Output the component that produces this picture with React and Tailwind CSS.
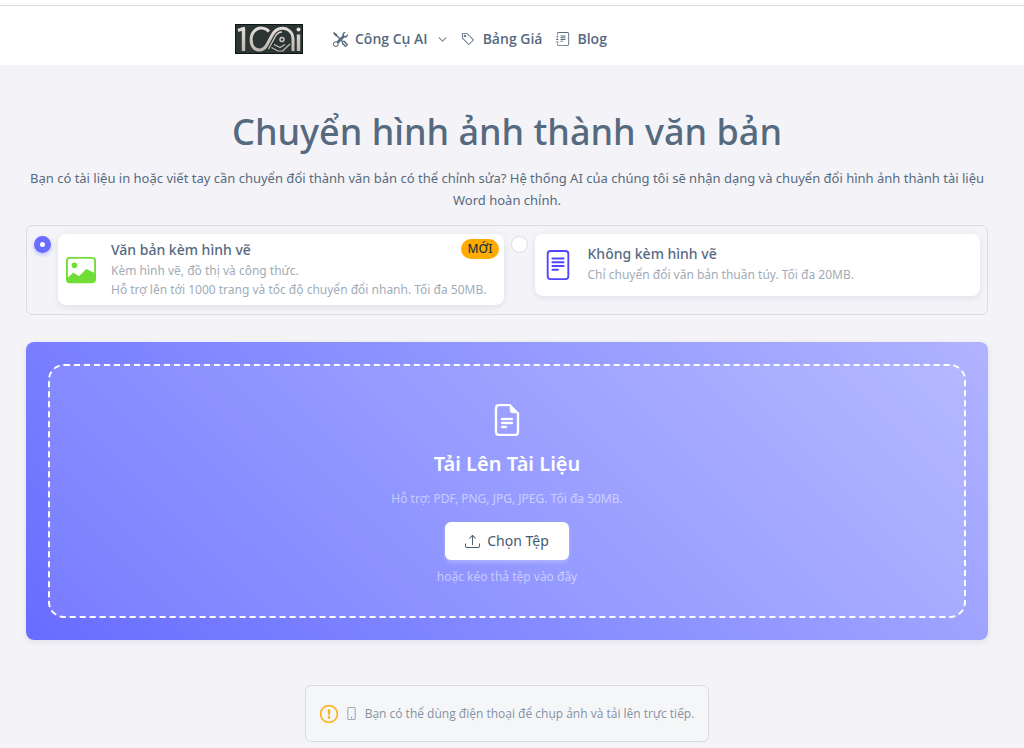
import React, { useState } from "react";
import {
  BsTools, BsTag, BsJournalText, BsChevronDown, BsImage, BsFileText,
  BsFileEarmarkText, BsUpload, BsPhone, BsExclamationCircle,
} from "react-icons/bs";

function Logo() {
  return (
    <svg viewBox="0 0 68 30" className="h-[30px] w-[68px]" role="img" aria-label="100Ai">
      <defs>
        <linearGradient id="silver" gradientUnits="userSpaceOnUse" x1="0" y1="2" x2="0" y2="28">
          <stop offset="0" stopColor="#e6e1dc" />
          <stop offset="1" stopColor="#bdb5ae" />
        </linearGradient>
      </defs>
      <rect width="68" height="30" fill="#2a3534" />
      <rect x="0.5" y="0.5" width="67" height="29" fill="none" stroke="#0f1716" />
      <g fill="none" stroke="url(#silver)" strokeLinejoin="round">
        <path d="M3 6.500L8.500 4.500V27" strokeWidth="3.400" />
        <path d="M34 7.500C31 3.500 24 3 20.500 6C15 10 15 20 19 24C23 27.500 28.500 26.500 31.500 21.500L37.500 10.500C40.500 5 46.500 3 51.500 5C56 7 58 10.500 58 15V27" strokeWidth="3" />
        <path d="M33.500 25L40 13C42 9 44.500 8 47 8" strokeWidth="1.400" />
        <path d="M36.500 23.500L43 27H47.500L55 20M39 20.500L45 23.500L50 20.500" strokeWidth="1.200" />
        <circle cx="47" cy="15.500" r="2" strokeWidth="1.400" />
        <path d="M63.500 10.500V27" strokeWidth="3.400" />
      </g>
      <circle cx="63.500" cy="5.500" r="2" fill="#e6e1dc" />
    </svg>
  );
}

function Option({ id, checked, onSelect, children, cardClass }) {
  return (
    <div className="flex min-w-0 flex-1 items-start gap-[7px]">
      <input
        id={id}
        type="radio"
        name="mode"
        checked={checked}
        onChange={onSelect}
        className="mt-[2px] size-[17px] shrink-0 appearance-none rounded-full border border-[#d9dee3] bg-white checked:border-[6px] checked:border-[#696cff] checked:shadow-[0_2px_4px_rgba(105,108,255,0.4)]"
      />
      <label htmlFor={id} className={`flex min-w-0 flex-1 rounded-lg bg-white shadow-[0_2px_6px_rgba(67,89,113,0.12)] ${cardClass}`}>
        {children}
      </label>
    </div>
  );
}

export default function App() {
  const [mode, setMode] = useState("figures");
  return (
    <div className="min-h-screen bg-[#f4f4f8] font-['Noto_Sans','Open_Sans',sans-serif] text-[#566a7f]">
      <header className="bg-white pt-[5px]">
        <div className="border-t border-[#d9dbe4]">
          <div className="flex h-[59px] items-center pt-[7px] pl-[235px]">
            <a href="#home"><Logo /></a>
            <nav className="ml-[30px] flex items-center font-['Open_Sans','Noto_Sans',sans-serif] text-sm font-semibold whitespace-nowrap">
              <a href="#tools" className="flex items-center">
                <BsTools size={15} />
                <span className="ml-[7px]">Công Cụ AI</span>
                <BsChevronDown size={9} strokeWidth={0.5} className="ml-[10px]" />
              </a>
              <a href="#pricing" className="ml-[14px] flex items-center gap-2">
                <BsTag size={14} />Bảng Giá
              </a>
              <a href="#blog" className="ml-[14px] flex items-center gap-[7px]">
                <BsJournalText size={14} />Blog
              </a>
            </nav>
          </div>
        </div>
      </header>
      <main className="pr-[10px] pb-[6px]">
        <div className="px-4 pt-[41px] text-center">
          <h1 className="text-4xl leading-[52px] font-medium">Chuyển hình ảnh thành văn bản</h1>
          <p className="mt-[9px] text-[13px] leading-[22px]">
            Bạn có tài liệu in hoặc viết tay cần chuyển đổi thành văn bản có thể chỉnh sửa? Hệ thống AI của chúng tôi sẽ nhận dạng và chuyển đổi hình ảnh thành tài liệu Word hoàn chỉnh.
          </p>
        </div>
        <div className="px-[26px] pt-[14px]">
          <div className="flex items-start gap-[7px] rounded-md border border-[#d9dee3] px-[7px] pt-2 pb-[9px]">
            <Option id="figures" checked={mode === "figures"} onSelect={() => setMode("figures")} cardClass="h-[71px] gap-[15px] pl-[8px] pr-[5px] pt-[5px]">
              <BsImage size={30} className="mt-[16px] shrink-0 text-[#71dd37]" />
              <span className="min-w-0 flex-1">
                <span className="flex h-[22px] items-center justify-between text-sm font-medium">
                  Văn bản kèm hình vẽ
                  <span className="-mt-[3px] rounded-full bg-[#ffab00] px-[6px] text-xs leading-[20px] font-medium text-[#233446]">MỚI</span>
                </span>
                <span className="block text-xs leading-[19px] text-[#a1acb8]">
                  Kèm hình vẽ, đồ thị và công thức.<br />
                  Hỗ trợ lên tới 1000 trang và tốc độ chuyển đổi nhanh. Tối đa 50MB.
                </span>
              </span>
            </Option>
            <Option id="plain" checked={mode === "plain"} onSelect={() => setMode("plain")} cardClass="h-[62px] items-center gap-[15px] px-[8px]">
              <BsFileText size={30} className="shrink-0 text-[#4f46ff]" />
              <span className="min-w-0 flex-1 pb-[3px]">
                <span className="block text-sm leading-[22px] font-medium">Không kèm hình vẽ</span>
                <span className="block text-xs leading-[19px] text-[#a1acb8]">Chỉ chuyển đổi văn bản thuần túy. Tối đa 20MB.</span>
              </span>
            </Option>
          </div>
          <section className="mt-[27px] rounded-lg bg-linear-45 from-[#696cff] to-[#b1b3ff] p-[22px] shadow-[0_2px_6px_rgba(67,89,113,0.12)]">
            <div className="flex h-[254px] flex-col items-center rounded-2xl border-2 border-dashed border-white bg-white/10 pt-[38px] text-white">
              <BsFileEarmarkText size={32} strokeWidth={0.2} />
              <h2 className="mt-[13px] text-xl leading-[30px] font-semibold">Tải Lên Tài Liệu</h2>
              <p className="mt-[10px] text-xs leading-[20px] text-white/50">Hỗ trợ: PDF, PNG, JPG, JPEG. Tối đa 50MB.</p>
              <button type="button" className="mt-[13px] flex h-[38px] items-center gap-[7px] rounded-md bg-white px-[20px] text-sm text-[#435971] shadow-[0_2px_4px_rgba(255,255,255,0.3)]">
                <BsUpload size={15} />Chọn Tệp
              </button>
              <p className="mt-[7px] text-xs leading-[20px] text-white/50">hoặc kéo thả tệp vào đây</p>
            </div>
          </section>
          <div className="mt-[45px] flex justify-center">
            <div role="note" className="flex h-[57px] items-center rounded-md border border-[#d5dde3] bg-[#f5f6f8] px-[14px] font-['Open_Sans','Noto_Sans',sans-serif] text-xs text-[#8592a3]">
              <BsExclamationCircle size={18} strokeWidth={0.4} className="text-[#ffab00]" />
              <BsPhone size={13} className="mx-[7px]" />
              Bạn có thể dùng điện thoại để chụp ảnh và tải lên trực tiếp.
            </div>
          </div>
        </div>
      </main>
    </div>
  );
}
